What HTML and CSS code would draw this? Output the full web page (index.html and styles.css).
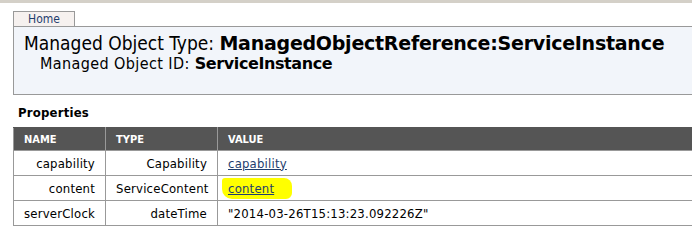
FILE: index.html
```html
<!DOCTYPE html>
<html lang="en">
<head>
    <meta charset="UTF-8">
    <title>Managed Object Browser</title>
    <link rel="stylesheet" href="styles.css">
</head>
<body>
    <div class="topbar"></div>
    <div class="page">
        <div class="tabs">
            <a class="tab" href="#">Home</a>
        </div>
        <div class="object-header">
            <div class="object-type">Managed Object Type: <b>ManagedObjectReference:ServiceInstance</b></div>
            <div class="object-id">Managed Object ID: <b>ServiceInstance</b></div>
        </div>

        <div class="section-title">Properties</div>
        <table class="props">
            <colgroup>
                <col class="col-name">
                <col class="col-type">
                <col>
            </colgroup>
            <thead>
                <tr>
                    <th>NAME</th>
                    <th>TYPE</th>
                    <th>VALUE</th>
                </tr>
            </thead>
            <tbody>
                <tr>
                    <td class="num">capability</td>
                    <td class="num">Capability</td>
                    <td><a href="#">capability</a></td>
                </tr>
                <tr>
                    <td class="num">content</td>
                    <td class="num">ServiceContent</td>
                    <td><a class="marked" href="#">content</a></td>
                </tr>
                <tr>
                    <td class="num">serverClock</td>
                    <td class="num">dateTime</td>
                    <td>"2014-03-26T15:13:23.092226Z"</td>
                </tr>
            </tbody>
        </table>
    </div>
</body>
</html>
```

FILE: styles.css
```css
body {
    margin: 0;
    font-family: "DejaVu Sans Condensed", "DejaVu Sans", Verdana, sans-serif;
    font-stretch: condensed;
    color: #000;
    background: #fff;
    overflow: hidden;
}
.topbar {
    height: 3px;
    background-color: #d4d0c8;
}
.page {
    padding-left: 13px;
    width: 720px;
}
.tabs {
    margin-top: 8px;
    display: flex;
}
.tab {
    display: block;
    width: 60px;
    text-align: center;
    font-size: 12px;
    line-height: 14px;
    color: #1f3e6e;
    text-decoration: none;
    background-color: #f6f1ef;
    border: 1px solid #999;
    border-bottom: none;
}
.object-header {
    background-color: #f2f5fa;
    border: 1px solid #999;
    border-right: none;
    height: 62px;
    padding-top: 5px;
}
/* bold parts are wider than the condensed face, use the normal one */
.object-header b {
    font-family: "DejaVu Sans", Verdana, sans-serif;
    font-stretch: normal;
}
.object-type {
    font-size: 19px;
    line-height: 22px;
    padding-left: 10px;
}
.object-type b {
    letter-spacing: -0.25px;
}
.object-id {
    font-size: 16px;
    line-height: 19px;
    padding-left: 26px;
    letter-spacing: 0.4px;
}
.object-id b {
    letter-spacing: -0.4px;
}
.section-title {
    font-size: 13px;
    font-weight: bold;
    letter-spacing: 0.2px;
    padding-left: 5px;
    margin-top: 10px;
    line-height: 16px;
}
.props {
    border-collapse: collapse;
    table-layout: fixed;
    margin-top: 6px;
    width: 720px;
    font-size: 13px;
    letter-spacing: 0.2px;
}
.col-name {
    width: 92px;
}
.col-type {
    width: 112px;
}
.props th {
    background-color: #555;
    color: #fff;
    font-size: 11px;
    letter-spacing: 0;
    text-align: left;
    padding: 0 10px;
    height: 22px;
    border: 1px solid #999;
    border-top: 1px solid #555;
}
.props td {
    border: 1px solid #999;
    padding: 0 10px;
    height: 24px;
    white-space: nowrap;
}
.props td.num {
    text-align: right;
}
.props a {
    color: #1f3e6e;
}
.marked {
    background-color: #ffff00;
    padding: 3px 18px 3px 6px;
    margin-left: -6px;
    border-radius: 3px 8px 6px 10px;
    color: #2a3a10;
}
```
